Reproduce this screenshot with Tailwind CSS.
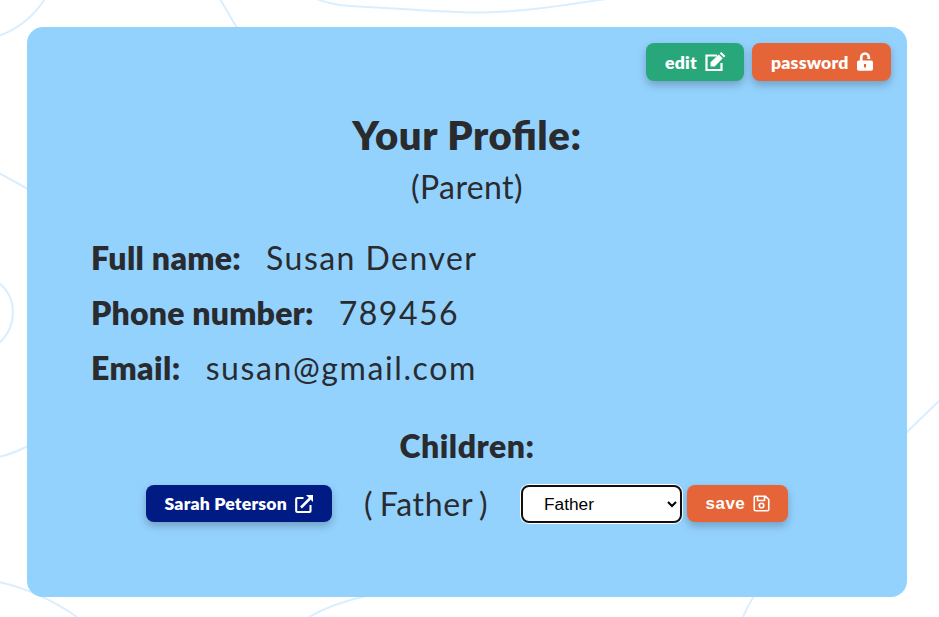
<!DOCTYPE html>
<html lang="en"><head><meta charset="utf-8"><title>Your Profile</title>
<script src="https://cdn.jsdelivr.net/npm/@tailwindcss/browser@4"></script></head>
<body class="relative h-[617px] overflow-hidden bg-white p-[27px] font-['Lato',sans-serif] text-[#292b2f]">
<svg class="absolute inset-0" width="939" height="617" fill="none" stroke="#daeefd" stroke-width="2"><path d="M-2 36Q26 27 45-1M220-1 237 28M-1 173 28 189M-1 283C17 297 18 326-1 343M-1 457Q12 454 28 446M-1 582Q40 591 77 617M309 617Q331 604 366 596M743 617Q748 605 754 596M317-1C328 4 338 5 350 6C410 9 440 12 474 12.500C520 12.500 560 6 606-1M906 433 940 400"/></svg>
<main class="relative flex h-[570px] w-[880px] flex-col rounded-2xl bg-[#94d2fe] px-16 pt-4">
<div class="-mr-12 flex justify-end gap-2 text-[17.6px] font-extrabold tracking-[0.2px] text-white">
<button class="flex h-[38px] w-[98px] items-center justify-between rounded-lg bg-[#28a77b] pr-[18px] pl-[19px] shadow-[0_4px_8px_rgba(0,0,0,0.24)]"><span class="pt-[3px]">edit</span><svg width="21" height="20" viewBox="0 0 21 20" fill="none" stroke="currentColor"><path d="M12 3.500H1.500V18H16.500V11" stroke-width="2.200"/><path d="M5.500 14.500V10.300L13.700 2.500 17.700 6.200 9.700 14.500ZM14.700 1.500 16.300 0 20.500 4 18.800 5.400Z" fill="currentColor" stroke="none"/></svg></button>
<button class="flex h-[38px] w-[139px] items-center justify-between rounded-lg bg-[#e56538] pr-[18px] pl-[19px] shadow-[0_4px_8px_rgba(0,0,0,0.24)]"><span class="pt-[3px]">password</span><svg class="-mt-0.5" width="16" height="19" viewBox="0 0 16 19" fill="none" stroke="currentColor"><path d="M4.200 9.500V5.300a3.800 3.800 0 0 1 7.600 0V7" stroke-width="2.700"/><path fill-rule="evenodd" d="M1.800 8.500H14.200A1.800 1.800 0 0 1 16 10.300V17A1.800 1.800 0 0 1 14.200 18.800H1.800A1.800 1.800 0 0 1 0 17V10.300A1.800 1.800 0 0 1 1.800 8.500ZM7 12V15.500H9V12Z" fill="currentColor" stroke="none"/></svg></button>
</div>
<h1 class="mt-[30px] text-center text-[40px] leading-[48px] font-extrabold tracking-[0.6px] [font-feature-settings:'liga']">Your Profile:</h1>
<p class="mt-[4px] text-center text-[32px] leading-[48px] tracking-[0.4px]">(Parent)</p>
<section class="mt-[19px] flex flex-col text-[32px] leading-[55px]">
<div class="flex gap-[25px]"><b class="font-extrabold tracking-[0.3px]">Full name:</b><span class="tracking-[1.450px]">Susan Denver</span></div>
<div class="flex gap-[25px]"><b class="font-extrabold tracking-[0.2px]">Phone number:</b><span class="tracking-[1.5px]">789456</span></div>
<div class="flex gap-[25px]"><b class="font-extrabold tracking-[0.4px]">Email:</b><span class="tracking-[1.6px]">susan@gmail.com</span></div>
</section>
<h2 class="mt-[27px] text-center text-[32px] leading-[48px] font-extrabold tracking-[0.5px]">Children:</h2>
<div class="mt-[15px] ml-[55px] flex h-[37px] items-center text-[17.6px]">
<button class="flex h-[37px] w-[186px] items-center justify-between rounded-lg bg-[#001b83] pr-[18px] pl-[18.500px] font-extrabold tracking-[0.2px] text-white shadow-[0_4px_8px_rgba(0,0,0,0.24)]"><span class="pt-0.5">Sarah Peterson</span><svg width="19" height="20" viewBox="0 0 19 20" fill="none" stroke="currentColor" stroke-width="2.100"><path d="M8.500 4H2.500Q1.200 4 1.200 5V17Q1.200 18 2.500 18H14.500Q15.500 18 15.500 17V11"/><path d="M6 13.500 15 4.500" stroke-width="2.500"/><path d="M11 1H18V8Z" fill="currentColor" stroke="none"/></svg></button>
<span class="ml-8 w-[125px] text-[32px] tracking-[0.7px] whitespace-nowrap [word-spacing:-2.500px]">( Father )</span>
<select class="ml-8 h-[38px] w-[161px] rounded-lg border-2 border-[#101010] bg-white pl-[17px] font-['Liberation_Sans',sans-serif] text-[17.3px] text-black shadow-[0_0_0_1px_white]"><option>Father</option></select>
<button class="ml-[5px] flex h-[37px] w-[101px] items-center justify-between rounded-lg bg-[#e56538] pr-[18px] pl-[18.500px] font-['Liberation_Sans',sans-serif] text-[17px] font-bold tracking-[0.5px] text-white shadow-[0_4px_8px_rgba(0,0,0,0.24)]"><span>save</span><svg width="17" height="18" viewBox="0 0 17 18" fill="none" stroke="currentColor" stroke-width="1.600"><path d="M2.500 1.250H12.500L15.750 4.500V14.500Q15.750 15.750 14.500 15.750H2.500Q1.250 15.750 1.250 14.500V2.500Q1.250 1.250 2.500 1.250ZM4.500 1.500V5.500H11.500V1.500"/><circle cx="8.500" cy="10.500" r="2.300"/></svg></button>
</div>
</main></body></html>
